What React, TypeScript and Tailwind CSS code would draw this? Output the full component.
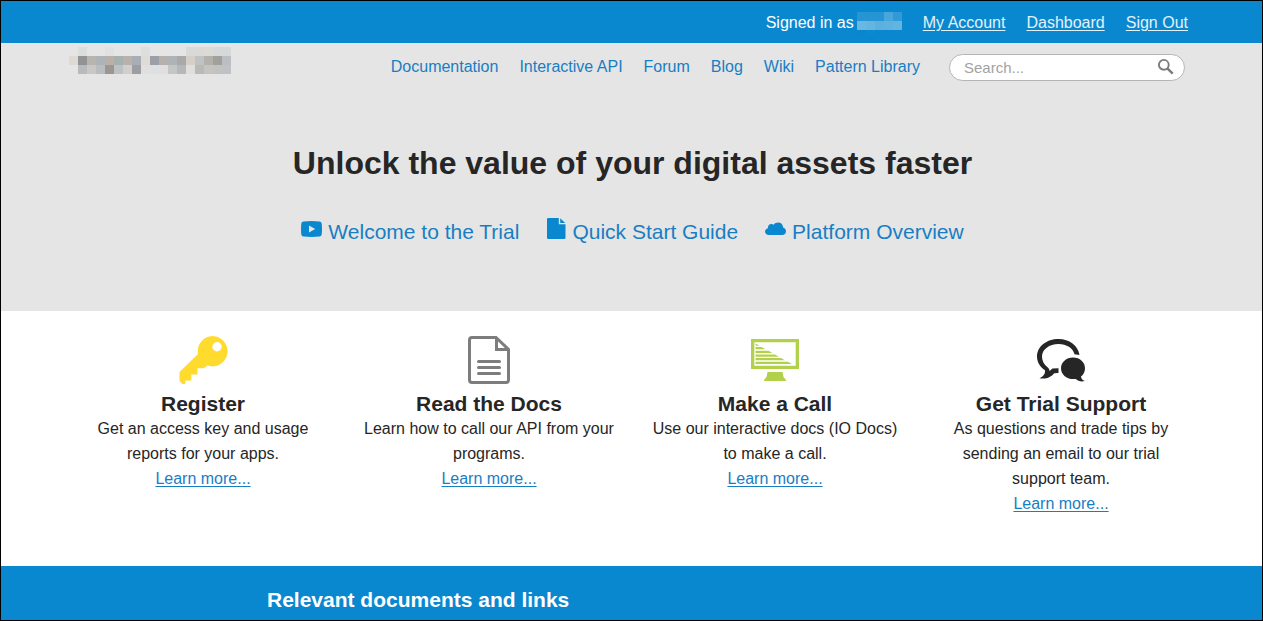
import React from "react";

const logoRows: string[][] = [
  ["", "#dcdddd", "", "", "#dfe2e1", "", "", "", "#dddfdf", "", "", "", "", "#d7dad9", "#dad9d5", "#dbdad6", "#d6d9da", "#d6d9da"],
  ["#ded9d2", "#929394", "#b8b4b0", "#adb3b6", "#bab0a9", "#a7b2b0", "#b9b2ac", "#a8aeb3", "#dfdbd6", "#9aa0a6", "#b7b1ae", "#aeb3b6", "#a9a9a9", "#d5cfc8", "#c1c3c3", "#b4b1ad", "#a39f9b", "#bbbfc3"],
  ["", "#b9babb", "#c9c8c6", "#b9bdc0", "#9a9793", "#bdc1c3", "#d0cfcd", "#9c9ea1", "#e0e0e0", "#dedfe0", "#dfdfdf", "#c4c5c5", "#b6b7b8", "#dfdfdf", "#b9b9b9", "#c5c4c3", "#c2c2c2", "#c0c1c2"],
];

const nameRows: string[][] = [
  ["#2795d3", "#2795d3", "#2795d3", "#47a7dc", "#2f9ad6"],
  ["#69b8e3", "#66b5e0", "#5bb0df", "#5eb2e0", "#63b4e1"],
  ["#0d85cc", "#0a8ad0", "", "", ""],
];

function Mosaic({ rows, label, width, height }: { rows: string[][]; label: string; width: number; height: number }) {
  return (
    <svg width={width} height={height} viewBox={`0 0 ${width} ${height}`} role="img" aria-label={label} shapeRendering="crispEdges">
      {rows.map((row, y) =>
        row.map((c, x) => (c ? <rect key={`${x}-${y}`} x={x * 9} y={y * 9} width="9" height="9" fill={c} /> : null)),
      )}
    </svg>
  );
}

function VideoIcon() {
  return (
    <svg width="21" height="16" viewBox="0 0 21 16" aria-hidden="true">
      <path fill="#0a88cf" fillRule="evenodd" d="M2.5.5Q10.500-.4 18.500.5 20.400.7 20.700 2.500 21.300 8 20.700 13.500 20.400 15.300 18.500 15.500 10.500 16.400 2.500 15.500.6 15.300.3 13.500-.3 8 .3 2.500.6.700 2.500.5ZM8 4.400v7.200L14.200 8Z" />
    </svg>
  );
}

function FileIcon() {
  return (
    <svg width="20" height="21" viewBox="0 0 20 21" aria-hidden="true">
      <path fill="#0a88cf" d="M2.200 0H12.800V6.300H19.500V19.800Q19.500 21 18.300 21H2.200Q1 21 1 19.800V1.200Q1 0 2.200 0ZM14.200.3 19.200 5H14.200Z" />
    </svg>
  );
}

function CloudIcon() {
  return (
    <svg width="21" height="13" viewBox="0 0 21 13" aria-hidden="true">
      <path fill="#0a88cf" d="M4 13C1.500 13 0 11.500 0 9.600 0 7.800 1.200 6.500 2.900 6.200 2.800 3.700 4.300 2.100 6.400 2.100 7.300 2.100 8 2.300 8.600 2.800 9.600 1.300 11.200.5 13 .5 16 .5 18 2.500 18.100 5.400 19.900 5.800 21 7.400 21 9.300 21 11.500 19.500 13 17.300 13Z" />
    </svg>
  );
}

function KeyIcon() {
  return (
    <svg width="49" height="48" viewBox="0 0 49 48" aria-hidden="true">
      <path fill="#ffdb2d" fillRule="evenodd" d="M33.500 0A15.200 15.200 0 1 1 28.500 29.600L25 32.300H18.500V38.500H12.300V44.500H6.300V48H3.500L.5 45V36L19 18A15.200 15.200 0 0 1 33.500 0ZM38 6A4.700 4.700 0 1 0 38 15.400 4.700 4.700 0 0 0 38 6Z" />
    </svg>
  );
}

function DocIcon() {
  return (
    <svg width="42" height="48" viewBox="0 0 42 48" aria-hidden="true" fill="none" stroke="#7d7d7d" strokeWidth="3">
      <path d="M4 1.500H28L40.500 13.500V44Q40.500 46.500 38 46.500H4Q1.500 46.500 1.500 44V4Q1.500 1.500 4 1.500Z" />
      <path d="M28.500 1.500V13.500H40.500" />
      <path strokeLinecap="round" d="M10.500 25.500H31.500M10.500 31.500H31.500M10.500 37.500H31.500" />
    </svg>
  );
}

function MonitorIcon() {
  return (
    <svg width="48" height="42" viewBox="0 0 48 42" aria-hidden="true">
      <path fill="#b2d14b" fillRule="evenodd" d="M0 0H48V30H0ZM3.300 3.300V26.700H44.700V3.300Z" />
      <path fill="#b2d14b" d="M16.500 33H31.500L32.500 38 35 41V42H13V41L15.500 38Z" />
      <path fill="#b2d14b" d="M4.500 4.500 8.500 6.800H4.500ZM4.500 8H10.500L14.500 10.300H4.500ZM4.500 11.700H17.500L21.500 14H4.500ZM4.500 15.400H24L28 17.700H4.500ZM4.500 19H30L34 21.300H4.500ZM4.500 22.700H37L41 25H4.500Z" />
    </svg>
  );
}

function ChatIcon() {
  return (
    <svg width="48" height="43" viewBox="0 0 48 43" aria-hidden="true" fill="#262626">
      <path d="M42.500 16C41 6.500 32.500 0 21.500 0 9.500 0 0 7.600 0 17.500 0 23 3 28 8 31.200 8.500 34.500 6.500 37.500 2.500 39.200 9.500 40.500 14 38 17.300 34.200L21.500 34V29.200L15.500 29.600 12.500 32C12.500 30.500 11.800 29 10.500 28.200 7 25.500 5 21.700 5 17.500 5 10.500 12.300 5 21.500 5 29.500 5 36 9.200 37.500 15.200Z" />
      <path d="M36 18.500C43 18.500 48 23.300 48 29.200 48 32.600 46.500 35.500 44 37.500 44.200 39.600 45.500 41.200 47.800 42 44 43 41 42 38.800 39.900 30.500 41.200 24 36 24 29.200 24 23.300 29.200 18.500 36 18.500Z" />
    </svg>
  );
}

const nav = ["Documentation", "Interactive API", "Forum", "Blog", "Wiki", "Pattern Library"];
const account = ["My Account", "Dashboard", "Sign Out"];
const heroLinks = [
  { text: "Welcome to the Trial", icon: <VideoIcon /> },
  { text: "Quick Start Guide", icon: <FileIcon /> },
  { text: "Platform Overview", icon: <CloudIcon /> },
];
const features = [
  { title: "Register", text: "Get an access key and usage reports for your apps.", icon: <KeyIcon /> },
  { title: "Read the Docs", text: "Learn how to call our API from your programs.", icon: <DocIcon /> },
  { title: "Make a Call", text: "Use our interactive docs (IO Docs) to make a call.", icon: <MonitorIcon /> },
  { title: "Get Trial Support", text: "As questions and trade tips by sending an email to our trial support team.", icon: <ChatIcon /> },
];

export default function App() {
  return (
    <div className="flex min-h-screen flex-col border border-black bg-white font-['Liberation_Sans',Arial,sans-serif] text-base text-[#262626]">
      <div className="bg-[#0a88cf] text-white">
        <div className="mx-auto flex h-[42px] max-w-[1145px] items-center justify-end gap-[21px] pr-4 pt-[2px]">
          <p className="flex items-center gap-[3px]">
            Signed in as
            <Mosaic rows={nameRows} label="User name" width={45} height={22} />
          </p>
          {account.map((t) => (
            <a key={t} href="#" className="text-[#e4f1f9] underline underline-offset-2">{t}</a>
          ))}
        </div>
      </div>

      <header className="bg-[#e5e5e5] pb-[65px]">
        <div className="mx-auto flex max-w-[1145px] items-start justify-between pl-[10px] pr-[19px]">
          <a href="#" className="pt-1" aria-label="Home">
            <Mosaic rows={logoRows} label="Logo" width={162} height={27} />
          </a>
          <div className="flex items-center pt-[11px]">
            <nav className="flex gap-[21px] pb-[2px] pr-[29px]">
              {nav.map((t) => (
                <a key={t} href="#" className="text-[#187ec4]">{t}</a>
              ))}
            </nav>
            <form role="search" className="flex h-[27px] w-[236px] items-center rounded-full border border-[#b5b5b5] bg-white pl-[14px] pr-[10px]">
              <input type="search" aria-label="Search" placeholder="Search..." className="min-w-0 flex-1 bg-transparent text-[15px] leading-5 outline-none placeholder:text-[#a3a3a3]" />
              <button type="button" aria-label="Search" className="pb-[2px]">
                <svg width="17" height="17" viewBox="0 0 17 17" fill="none" stroke="#7b7b7b" aria-hidden="true">
                  <circle cx="6.800" cy="6.800" r="4.900" strokeWidth="1.900" />
                  <path d="M10.300 10.300 15.700 15.700" strokeWidth="2.400" />
                </svg>
              </button>
            </form>
          </div>
        </div>
        <div className="pl-[2px]">
          <h1 className="pt-[60px] text-center text-[32px] font-bold leading-[44px]">Unlock the value of your digital assets faster</h1>
          <div className="flex justify-center gap-[27px] pt-[33px] text-[21px] leading-7 text-[#187ec4]">
            {heroLinks.map((l) => (
              <a key={l.text} href="#" className="flex items-center gap-[6px]">
                <span className="pb-[7px]">{l.icon}</span>
                <span>{l.text}</span>
              </a>
            ))}
          </div>
        </div>
      </header>

      <main className="mx-auto grid w-full max-w-[1145px] grid-cols-4 pb-[50px] pl-px pt-[25px]">
        {features.map((f) => (
          <section key={f.title} className="flex flex-col items-center px-[17px] text-center">
            <div className="flex h-[48px] items-center">{f.icon}</div>
            <h2 className="pt-[7px] text-[21px] font-bold leading-[25px]">{f.title}</h2>
            <p className="leading-[25px]">{f.text}</p>
            <a href="#" className="leading-[25px] text-[#187ec4] underline underline-offset-2">Learn more...</a>
          </section>
        ))}
      </main>

      <footer className="flex-1 bg-[#0a88cf] text-white">
        <div className="mx-auto max-w-[729px] pb-[6px] pt-[21px]">
          <h2 className="text-[21px] font-bold leading-[26px]">Relevant documents and links</h2>
        </div>
      </footer>
    </div>
  );
}
